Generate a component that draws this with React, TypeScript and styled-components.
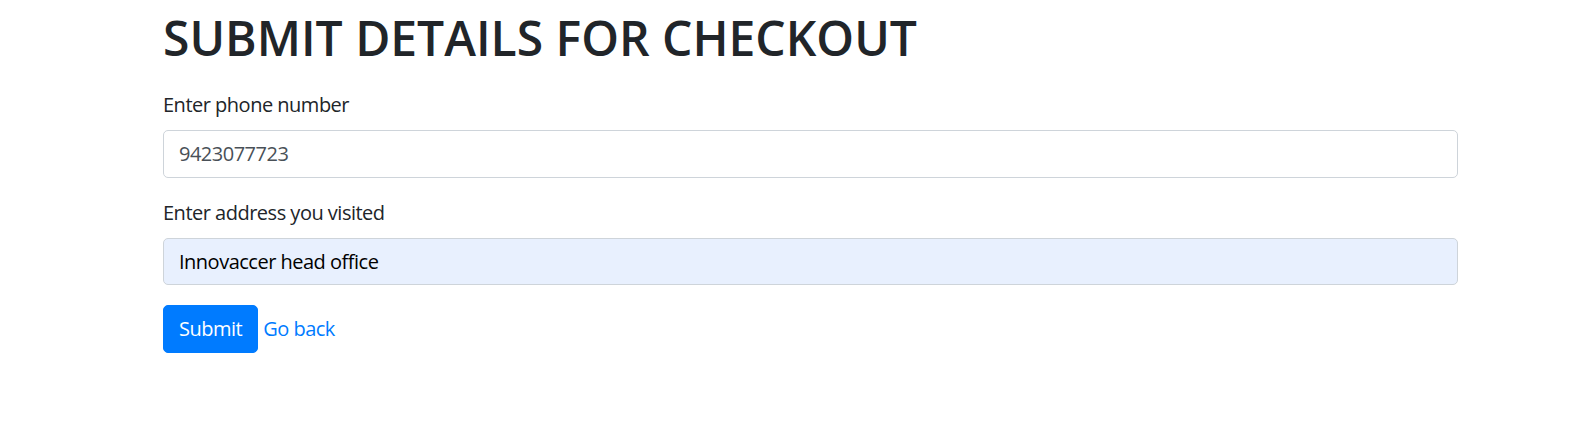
import React from "react";
import styled, { createGlobalStyle } from "styled-components";

const GlobalStyle = createGlobalStyle`
  *, *::before, *::after { box-sizing: border-box; }
  body {
    margin: 0;
    background: #ffffff;
    color: #212529;
    font-family: "Open Sans", "Noto Sans", "Liberation Sans", sans-serif;
    font-size: 20px;
    line-height: 1.5;
    letter-spacing: -0.5px;
  }
`;

const Page = styled.main`
  padding: 8px 0 0 163px;
`;

const Container = styled.div`
  width: 1295px;
`;

const Heading = styled.h1`
  margin: 0 0 22px;
  font-size: 48px;
  font-weight: 600;
  line-height: 60px;
  letter-spacing: 0;
  color: #212529;
`;

const Form = styled.form`
  display: flex;
  flex-direction: column;
  gap: 20px;
`;

const FormGroup = styled.div`
  display: flex;
  flex-direction: column;
`;

const Label = styled.label`
  display: block;
  margin-bottom: 10px;
  font-size: 20px;
  line-height: 30px;
  color: #212529;
`;

const Input = styled.input<{ $autofilled?: boolean }>`
  display: block;
  width: 100%;
  height: 47.5px;
  padding: 7.5px 15px;
  font-family: inherit;
  font-size: 20px;
  line-height: 30px;
  letter-spacing: inherit;
  color: ${(p) => (p.$autofilled ? "#000000" : "#495057")};
  background: ${(p) => (p.$autofilled ? "#e8f0fe" : "#ffffff")};
  border: 1.25px solid #ced4da;
  border-radius: 5px;
  outline: none;
`;

const Actions = styled.div`
  display: flex;
  align-items: baseline;
  gap: 5px;
`;

const Button = styled.button`
  display: inline-block;
  height: 47.5px;
  padding: 7.5px 15px;
  font-family: inherit;
  font-size: 20px;
  line-height: 30px;
  letter-spacing: inherit;
  color: #ffffff;
  background: #007bff;
  border: 1.25px solid #007bff;
  border-radius: 5px;
  cursor: pointer;
`;

const BackLink = styled.a`
  font-size: 20px;
  line-height: 30px;
  color: #007bff;
  text-decoration: none;
`;

export default function App() {
  return (
    <>
      <GlobalStyle />
      <Page>
        <Container>
          <Heading>SUBMIT DETAILS FOR CHECKOUT</Heading>
          <Form onSubmit={(e) => e.preventDefault()}>
            <FormGroup>
              <Label htmlFor="phone">Enter phone number</Label>
              <Input id="phone" type="text" defaultValue="9423077723" />
            </FormGroup>
            <FormGroup>
              <Label htmlFor="address">Enter address you visited</Label>
              <Input id="address" type="text" defaultValue="Innovaccer head office" $autofilled />
            </FormGroup>
            <Actions>
              <Button type="submit">Submit</Button>
              <BackLink href="#">Go back</BackLink>
            </Actions>
          </Form>
        </Container>
      </Page>
    </>
  );
}
